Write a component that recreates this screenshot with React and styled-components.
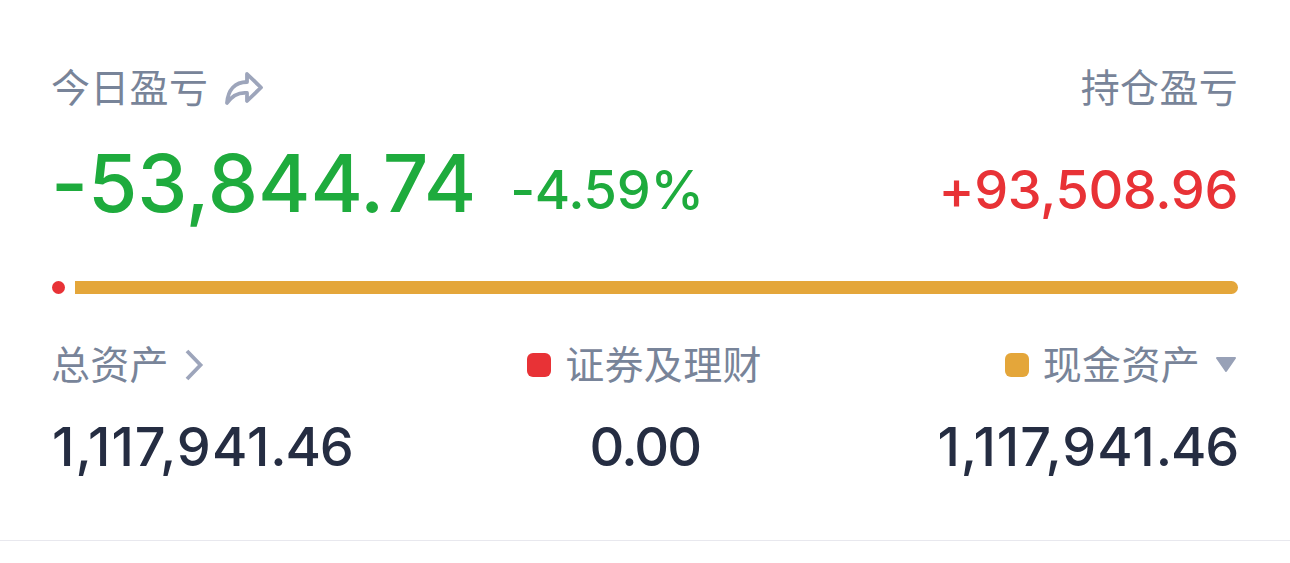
import React from 'react'
import styled, { createGlobalStyle } from 'styled-components'

const App = () => {
  return (
    <>
      <GlobalStyle />
      <Card>
        <LabelRow>
          <Label><LabelText>今日盈亏</LabelText>
            <ShareIcon viewBox="0 0 40 36">
              <path d="M23 4 L37 17.5 L23 31 V23 C14 22 8 26 3 33 C4 20 11 12 23 12 Z" />
            </ShareIcon>
          </Label>
          <Label><LabelText>持仓盈亏</LabelText></Label>
        </LabelRow>
        <ProfitRow>
          <Today>-53,844.74</Today>
          <Rate>-4.59%</Rate>
          <Holding>+93,508.96</Holding>
        </ProfitRow>
        <Bar>
          <Dot />
          <Cash />
        </Bar>
        <AssetRow>
          <Label><LabelText>总资产</LabelText>
            <Chevron viewBox="0 0 20 32">
              <path d="M2 2 L15.5 16 L2 30" />
            </Chevron>
          </Label>
          <Label><Square color="#e83236" /><LabelText>证券及理财</LabelText></Label>
          <Label><Square color="#e4a63a" /><LabelText>现金资产</LabelText>
            <Triangle viewBox="0 0 22 16">
              <path d="M2 1 H20 L11 14 Z" />
            </Triangle>
          </Label>
        </AssetRow>
        <ValueRow>
          <Value spacing="1px">1,117,941<Fraction>.46</Fraction></Value>
          <Value spacing="-1.8px">0.00</Value>
          <Value spacing="1px">1,117,941<Fraction>.46</Fraction></Value>
        </ValueRow>
      </Card>
    </>
  )
}

const GlobalStyle = createGlobalStyle`
  body {
    margin: 0;
    background: #fff;
    font-family: Inter, "Noto Sans CJK SC", sans-serif;
  }
`

const Card = styled.div`
  box-sizing: border-box;
  height: 541px;
  padding: 58px 52px 0;
  border-bottom: 1px solid #e8e8ee;
`

const LabelRow = styled.div`
  display: flex;
  justify-content: space-between;
  height: 60px;
`

const Label = styled.div`
  display: flex;
  align-items: center;
  height: 60px;
  margin-left: -1px;
  font-family: "Noto Sans CJK SC", sans-serif;
  font-size: 39px;
  letter-spacing: 0.3px;
  line-height: 54px;
  color: #788499;
  white-space: nowrap;
`

const LabelText = styled.span`
  padding-bottom: 7px;
`

const ShareIcon = styled.svg`
  width: 40px;
  height: 36px;
  margin-left: 16px;
  fill: none;
  stroke: #9da5bb;
  stroke-width: 3.8;
  stroke-linejoin: round;
`

const ProfitRow = styled.div`
  display: flex;
  align-items: flex-start;
  height: 163px;
  font-weight: 500;
  line-height: 130px;
`

const Today = styled.div`
  margin-left: -1px;
  font-size: 80px;
  letter-spacing: -0.1px;
  color: #1eab3d;
`

const Rate = styled.div`
  margin-left: 34px;
  padding-top: 7px;
  font-size: 54px;
  letter-spacing: -0.3px;
  color: #1eab3d;
`

const Holding = styled.div`
  margin-left: auto;
  padding-top: 7px;
  font-size: 54px;
  letter-spacing: -0.4px;
  color: #e83236;
`

const Bar = styled.div`
  display: flex;
  gap: 10px;
  height: 13px;
`

const Dot = styled.div`
  width: 13px;
  border-radius: 50%;
  background: #e83236;
`

const Cash = styled.div`
  flex: 1;
  border-radius: 0 7px 7px 0;
  background: #e4a63a;
`

const AssetRow = styled.div`
  display: grid;
  grid-template-columns: 1fr auto 1fr;
  margin-top: 41px;
  > :last-child {
    justify-self: end;
  }
`

const Chevron = styled.svg`
  width: 20px;
  height: 32px;
  margin-left: 16px;
  fill: none;
  stroke: #9da5bb;
  stroke-width: 3.8;
`

const Square = styled.span`
  width: 24px;
  height: 24px;
  margin-right: 14px;
  border-radius: 6px;
  background: ${({ color }) => color};
`

const Triangle = styled.svg`
  width: 22px;
  height: 16px;
  margin: 0 1px 0 15px;
  fill: #98a1b7;
  stroke: #98a1b7;
  stroke-width: 2;
  stroke-linejoin: round;
`

const ValueRow = styled(AssetRow)`
  margin-top: 18px;
`

const Value = styled.div`
  font-size: 54px;
  font-weight: 500;
  line-height: 68px;
  letter-spacing: ${({ spacing }) => spacing};
  color: #252d42;
`

const Fraction = styled.span`
  letter-spacing: -1.2px;
`

export default App
